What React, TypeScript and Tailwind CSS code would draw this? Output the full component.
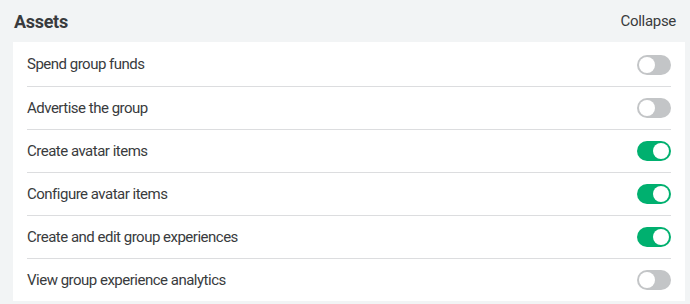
import { useState } from 'react';

const permissions = [
  { label: 'Spend group funds', on: false },
  { label: 'Advertise the group', on: false },
  { label: 'Create avatar items', on: true },
  { label: 'Configure avatar items', on: true },
  { label: 'Create and edit group experiences', on: true },
  { label: 'View group experience analytics', on: false },
];

function Toggle({ on, onClick }: { on: boolean; onClick: () => void }) {
  return (
    <button
      onClick={onClick}
      className={`relative w-[34px] h-[20px] rounded-full ${on ? 'bg-[#00b06f]' : 'bg-[#c3c5c7]'}`}
    >
      <span
        className={`absolute top-[2px] w-[16px] h-[16px] rounded-full bg-white ${on ? 'left-[16px]' : 'left-[2px]'}`}
      />
    </button>
  );
}

export default function App() {
  const [items, setItems] = useState(permissions);

  return (
    <div className="w-[690px] h-[304px] bg-[#f2f4f5] font-['Roboto',sans-serif] text-[#393b3d] overflow-hidden">
      <div className="flex items-center justify-between h-[42px] pl-[14px] pr-[14px]">
        <h2 className="text-[18px] font-bold tracking-[-0.3px] pt-[1px]">Assets</h2>
        <span className="text-[15px] tracking-[-0.3px]">Collapse</span>
      </div>
      <div className="ml-[13px] mr-[5px] bg-white pt-px">
        {items.map((p, i) => (
          <div key={p.label} className="px-[14px]">
            <div
              className={`flex items-center justify-between h-[43px] ${i > 0 ? 'border-t border-[#dcdddf]' : ''}`}
            >
              <span className="text-[15px] tracking-[-0.5px]">{p.label}</span>
              <Toggle
                on={p.on}
                onClick={() =>
                  setItems(items.map((it, j) => (j === i ? { ...it, on: !it.on } : it)))
                }
              />
            </div>
          </div>
        ))}
      </div>
    </div>
  );
}
